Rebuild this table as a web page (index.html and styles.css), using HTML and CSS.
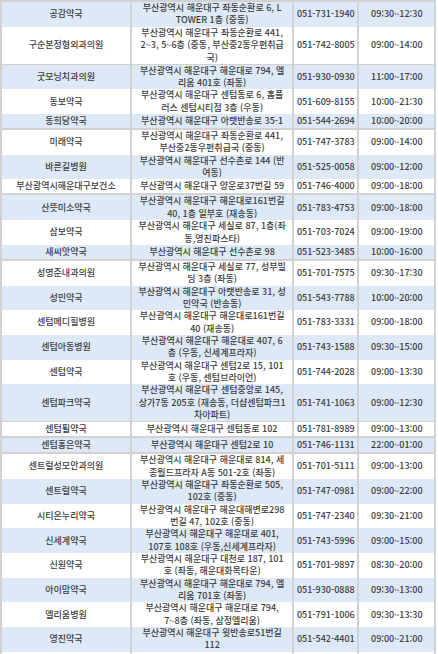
FILE: index.html
```html
<!DOCTYPE html>
<html lang="ko">
<head>
<meta charset="utf-8">
<title>해운대구 의료기관</title>
<link rel="stylesheet" href="styles.css">
</head>
<body>
<div class="table">
  <div class="row h2 alt"><div class="c"><span>공감약국</span></div><div class="c"><span>부산광역시 해운대구 좌동순환로 6, L<br>TOWER 1층 (중동)</span></div><div class="c"><span>051-731-1940</span></div><div class="c"><span>09:30~12:30</span></div></div>
  <div class="row h3"><div class="c"><span>구순본정형외과의원</span></div><div class="c"><span>부산광역시 해운대구 좌동순환로 441,<br>2~3, 5~6층 (중동, 부산중2동우편취급<br>국)</span></div><div class="c"><span>051-742-8005</span></div><div class="c"><span>09:00~14:00</span></div></div>
  <div class="row h2 alt"><div class="c"><span>굿모닝치과의원</span></div><div class="c"><span>부산광역시 해운대구 해운대로 794, 엘<br>리움 401호 (좌동)</span></div><div class="c"><span>051-930-0930</span></div><div class="c"><span>11:00~17:00</span></div></div>
  <div class="row h2"><div class="c"><span>동보약국</span></div><div class="c"><span>부산광역시 해운대구 센텀동로 6, 홈플<br>러스 센텀시티점 3층 (우동)</span></div><div class="c"><span>051-609-8155</span></div><div class="c"><span>10:00~21:30</span></div></div>
  <div class="row h1 alt"><div class="c"><span>동희당약국</span></div><div class="c"><span>부산광역시 해운대구 아랫반송로 35-1</span></div><div class="c"><span>051-544-2694</span></div><div class="c"><span>10:00~20:00</span></div></div>
  <div class="row h2"><div class="c"><span>미래약국</span></div><div class="c"><span>부산광역시 해운대구 좌동순환로 441,<br>부산중2동우편취급국 (중동)</span></div><div class="c"><span>051-747-3783</span></div><div class="c"><span>09:00~14:00</span></div></div>
  <div class="row h2 alt"><div class="c"><span>바른길병원</span></div><div class="c"><span>부산광역시 해운대구 선수촌로 144 (반<br>여동)</span></div><div class="c"><span>051-525-0058</span></div><div class="c"><span>09:00~12:00</span></div></div>
  <div class="row h1"><div class="c"><span>부산광역시해운대구보건소</span></div><div class="c"><span>부산광역시 해운대구 양운로37번길 59</span></div><div class="c"><span>051-746-4000</span></div><div class="c"><span>09:00~18:00</span></div></div>
  <div class="row h2 alt"><div class="c"><span>산뜻미소약국</span></div><div class="c"><span>부산광역시 해운대구 해운대로161번길<br>40, 1층 일부호 (재송동)</span></div><div class="c"><span>051-783-4753</span></div><div class="c"><span>09:00~18:00</span></div></div>
  <div class="row h2"><div class="c"><span>삼보약국</span></div><div class="c"><span>부산광역시 해운대구 세실로 87, 1층(좌<br>동,영진파스타)</span></div><div class="c"><span>051-703-7024</span></div><div class="c"><span>09:00~19:00</span></div></div>
  <div class="row h1 alt"><div class="c"><span>새씨앗약국</span></div><div class="c"><span>부산광역시 해운대구 선수촌로 98</span></div><div class="c"><span>051-523-3485</span></div><div class="c"><span>10:00~16:00</span></div></div>
  <div class="row h2"><div class="c"><span>성명준내과의원</span></div><div class="c"><span>부산광역시 해운대구 세실로 77, 성부빌<br>딩 3층 (좌동)</span></div><div class="c"><span>051-701-7575</span></div><div class="c"><span>09:30~17:30</span></div></div>
  <div class="row h2 alt"><div class="c"><span>성민약국</span></div><div class="c"><span>부산광역시 해운대구 아랫반송로 31, 성<br>민약국 (반송동)</span></div><div class="c"><span>051-543-7788</span></div><div class="c"><span>10:00~20:00</span></div></div>
  <div class="row h2"><div class="c"><span>센텀메디힐병원</span></div><div class="c"><span>부산광역시 해운대구 해운대로161번길<br>40 (재송동)</span></div><div class="c"><span>051-783-3331</span></div><div class="c"><span>09:00~18:00</span></div></div>
  <div class="row h2 alt"><div class="c"><span>센텀아동병원</span></div><div class="c"><span>부산광역시 해운대구 해운대로 407, 6<br>층 (우동, 신세계프라자)</span></div><div class="c"><span>051-743-1588</span></div><div class="c"><span>09:30~15:00</span></div></div>
  <div class="row h2"><div class="c"><span>센텀약국</span></div><div class="c"><span>부산광역시 해운대구 센텀2로 15, 101<br>호 (우동, 센텀브라이언)</span></div><div class="c"><span>051-744-2028</span></div><div class="c"><span>09:00~13:30</span></div></div>
  <div class="row h3 alt"><div class="c"><span>센텀파크약국</span></div><div class="c"><span>부산광역시 해운대구 센텀중앙로 145,<br>상가7동 205호 (재송동, 더샵센텀파크1<br>차아파트)</span></div><div class="c"><span>051-741-1063</span></div><div class="c"><span>09:00~12:30</span></div></div>
  <div class="row h1"><div class="c"><span>센텀필약국</span></div><div class="c"><span>부산광역시 해운대구 센텀동로 102</span></div><div class="c"><span>051-781-8989</span></div><div class="c"><span>09:00~13:00</span></div></div>
  <div class="row h1 alt"><div class="c"><span>센텀홍은약국</span></div><div class="c"><span>부산광역시 해운대구 센텀2로 10</span></div><div class="c"><span>051-746-1131</span></div><div class="c"><span>22:00~01:00</span></div></div>
  <div class="row h2"><div class="c"><span>센트럴성모안과의원</span></div><div class="c"><span>부산광역시 해운대구 해운대로 814, 세<br>종월드프라자 A동 501-2호 (좌동)</span></div><div class="c"><span>051-701-5111</span></div><div class="c"><span>09:00~13:00</span></div></div>
  <div class="row h2 alt"><div class="c"><span>센트럴약국</span></div><div class="c"><span>부산광역시 해운대구 좌동순환로 505,<br>102호 (중동)</span></div><div class="c"><span>051-747-0981</span></div><div class="c"><span>09:00~22:00</span></div></div>
  <div class="row h2"><div class="c"><span>시티온누리약국</span></div><div class="c"><span>부산광역시 해운대구 해운대해변로298<br>번길 47, 102호 (중동)</span></div><div class="c"><span>051-747-2340</span></div><div class="c"><span>09:30~21:00</span></div></div>
  <div class="row h2 alt"><div class="c"><span>신세계약국</span></div><div class="c"><span>부산광역시 해운대구 해운대로 401,<br>107호 108호 (우동,신세계프라자)</span></div><div class="c"><span>051-743-5996</span></div><div class="c"><span>09:00~15:00</span></div></div>
  <div class="row h2"><div class="c"><span>신원약국</span></div><div class="c"><span>부산광역시 해운대구 대천로 187, 101<br>호 (좌동, 해운대화목타운)</span></div><div class="c"><span>051-701-9897</span></div><div class="c"><span>08:30~20:00</span></div></div>
  <div class="row h2 alt"><div class="c"><span>아이맘약국</span></div><div class="c"><span>부산광역시 해운대구 해운대로 794, 엘<br>리움 701호 (좌동)</span></div><div class="c"><span>051-930-0888</span></div><div class="c"><span>09:30~13:00</span></div></div>
  <div class="row h2"><div class="c"><span>엘리움병원</span></div><div class="c"><span>부산광역시 해운대구 해운대로 794,<br>7~8층 (좌동, 삼정엘리움)</span></div><div class="c"><span>051-791-1006</span></div><div class="c"><span>09:30~13:30</span></div></div>
  <div class="row h2 alt"><div class="c"><span>영진약국</span></div><div class="c"><span>부산광역시 해운대구 윗반송로51번길<br>112</span></div><div class="c"><span>051-542-4401</span></div><div class="c"><span>09:00~21:00</span></div></div>
  <div class="row h2"><div class="c"></div><div class="c"></div><div class="c"></div><div class="c"></div></div>
</div>
</body>
</html>
```

FILE: styles.css
```css
html, body {
  margin: 0;
  padding: 0;
  background: #ffffff;
}

body {
  font-family: "Noto Sans CJK KR", "Noto Sans", sans-serif;
  font-size: 9px;
  font-weight: 500;
  line-height: 12.4px;
  color: #3c3c3c;
  overflow: hidden;
}

.table {
  width: 436.3px;
  display: flex;
  flex-direction: column;
  gap: 2px;
  padding: 2px;
  box-sizing: border-box;
  background: #d2d2d2;
}

.row {
  display: grid;
  grid-template-columns: 128px 160.3px 63px 1fr;
  column-gap: 2px;
}

.h1 { height: 14px; }
.h2 { height: 22.7px; }
.h3 { height: 36px; }

.c {
  display: flex;
  align-items: center;
  justify-content: center;
  background: #ffffff;
  min-width: 0;
}

.alt .c {
  background: #dde9f6;
}

.c span {
  display: block;
  white-space: nowrap;
  text-align: center;
}
```
